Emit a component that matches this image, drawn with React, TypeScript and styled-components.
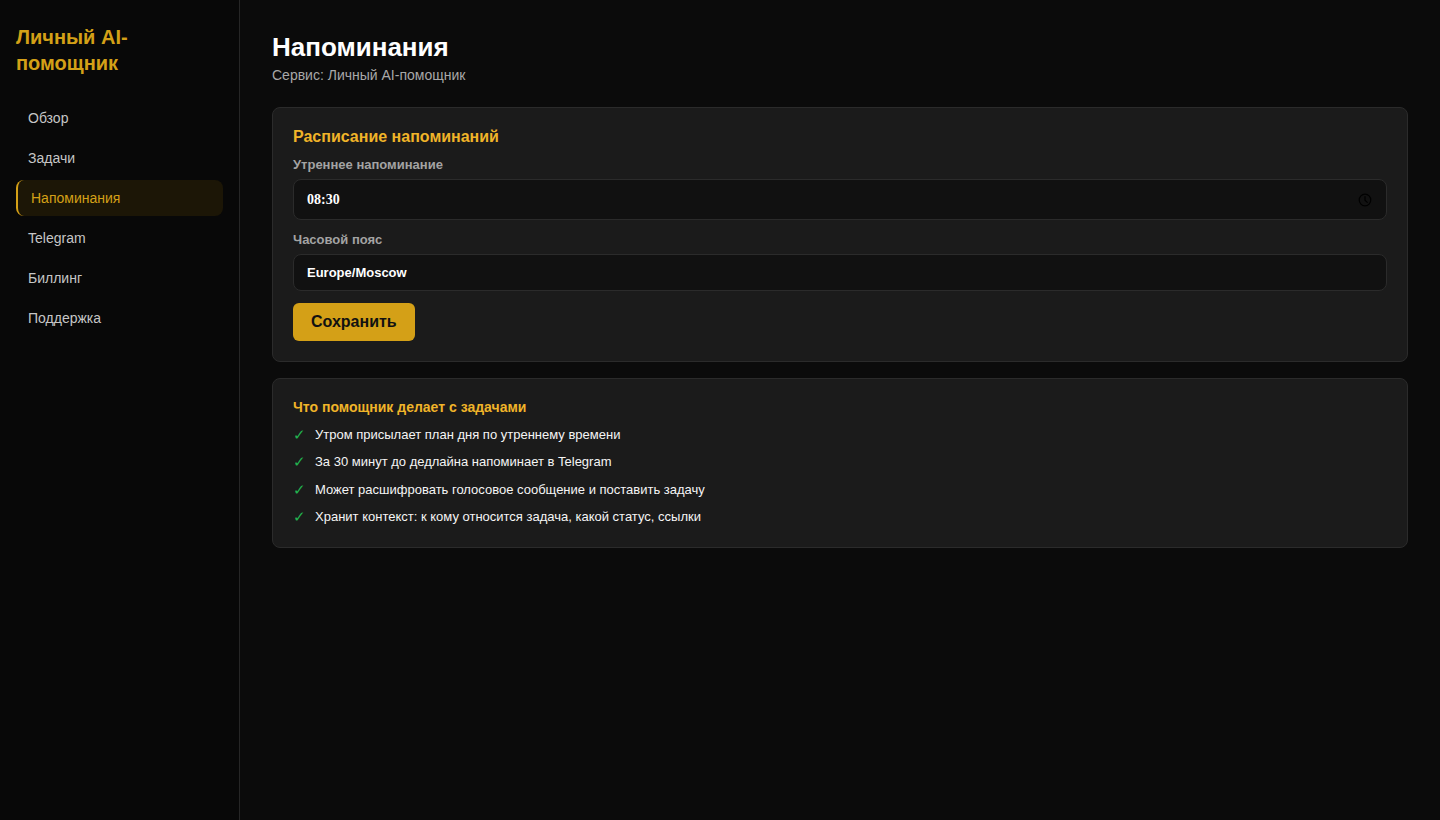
import React, { useState } from "react";
import styled, { createGlobalStyle } from "styled-components";

const GlobalStyle = createGlobalStyle`
  html, body {
    margin: 0;
    padding: 0;
    background: #0b0b0b;
    font-family: "Liberation Sans", Arial, sans-serif;
    color: #f2f2f2;
  }
  * { box-sizing: border-box; }
`;

const gold = "#d4a017";
const goldText = "#f0b429";

const Layout = styled.div`
  display: flex;
  min-height: 820px;
`;

const Sidebar = styled.aside`
  width: 240px;
  flex-shrink: 0;
  background: #080808;
  border-right: 1px solid #262626;
  padding: 24px 16px 0 16px;
`;

const Brand = styled.div`
  color: ${gold};
  font-size: 20px;
  font-weight: 800;
  line-height: 26px;
  margin-bottom: 24px;
`;

const Nav = styled.nav`
  display: flex;
  flex-direction: column;
  gap: 4px;
`;

const NavItem = styled.a<{ $active?: boolean }>`
  display: block;
  height: 36px;
  line-height: 36px;
  padding: 0 ${(p) => (p.$active ? "13px" : "12px")};
  font-size: 14px;
  border-radius: 8px;
  color: ${(p) => (p.$active ? gold : "#c6c6c6")};
  background: ${(p) => (p.$active ? "#1c1606" : "transparent")};
  border-left: ${(p) => (p.$active ? `2px solid ${gold}` : "none")};
  cursor: pointer;
`;

const Main = styled.main`
  flex: 1;
  padding: 32px 32px;
`;

const Title = styled.h1`
  margin: 0;
  font-size: 26px;
  line-height: 30px;
  font-weight: 700;
  color: #ffffff;
`;

const Subtitle = styled.div`
  margin-top: 5px;
  font-size: 14px;
  line-height: 16px;
  color: #a8a8a8;
`;

const Card = styled.section`
  margin-top: 24px;
  background: #1b1b1b;
  border: 1px solid #2b2b2b;
  border-radius: 8px;
  padding: 20px;
  & + & {
    margin-top: 16px;
    padding-bottom: 22px;
  }
`;

const CardTitle = styled.h2<{ $size?: number }>`
  margin: 0;
  font-size: ${(p) => p.$size ?? 16}px;
  line-height: 17px;
  font-weight: 700;
  color: ${goldText};
`;

const Label = styled.label`
  display: block;
  margin-top: 12px;
  margin-bottom: 7px;
  font-size: 13px;
  line-height: 15px;
  font-weight: 700;
  color: #a3a3a3;
`;

const FieldWrap = styled.div`
  position: relative;
`;

const Field = styled.input<{ $tall?: boolean; $serif?: boolean }>`
  display: block;
  width: 100%;
  height: ${(p) => (p.$tall ? 41 : 37)}px;
  background: #111111;
  border: 1px solid #2b2b2b;
  border-radius: 8px;
  padding: 0 13px;
  color: #ffffff;
  font-size: ${(p) => (p.$serif ? 14 : 13)}px;
  font-weight: 700;
  font-family: ${(p) =>
    p.$serif
      ? `"Liberation Serif", "Times New Roman", serif`
      : `"Liberation Sans", Arial, sans-serif`};
  outline: none;
`;

const ClockIcon = styled.svg`
  position: absolute;
  right: 15px;
  top: 50%;
  transform: translateY(-50%);
  width: 14px;
  height: 14px;
  pointer-events: none;
`;

const SaveButton = styled.button`
  margin-top: 12px;
  height: 38px;
  padding: 0 18px;
  background: ${gold};
  color: #111;
  border: none;
  border-radius: 6px;
  font-family: "Liberation Sans", Arial, sans-serif;
  font-size: 16px;
  font-weight: 700;
  cursor: pointer;
`;

const List = styled.ul`
  list-style: none;
  margin: 10px 0 0 0;
  padding: 0;
  display: flex;
  flex-direction: column;
  gap: 10.4px;
`;

const ListItem = styled.li`
  display: flex;
  align-items: center;
  gap: 11px;
  font-size: 13px;
  line-height: 17px;
  color: #f5f5f5;
`;

const Check = styled.span`
  color: #22b350;
  font-size: 15px;
  width: 11px;
`;

const navItems = ["Обзор", "Задачи", "Напоминания", "Telegram", "Биллинг", "Поддержка"];

const features = [
  "Утром присылает план дня по утреннему времени",
  "За 30 минут до дедлайна напоминает в Telegram",
  "Может расшифровать голосовое сообщение и поставить задачу",
  "Хранит контекст: к кому относится задача, какой статус, ссылки",
];

const App: React.FC = () => {
  const [time, setTime] = useState("08:30");
  const [zone, setZone] = useState("Europe/Moscow");

  return (
    <>
      <GlobalStyle />
      <Layout>
        <Sidebar>
          <Brand>Личный AI-помощник</Brand>
          <Nav>
            {navItems.map((item) => (
              <NavItem key={item} $active={item === "Напоминания"}>
                {item}
              </NavItem>
            ))}
          </Nav>
        </Sidebar>
        <Main>
          <Title>Напоминания</Title>
          <Subtitle>Сервис: Личный AI-помощник</Subtitle>

          <Card>
            <CardTitle>Расписание напоминаний</CardTitle>
            <Label>Утреннее напоминание</Label>
            <FieldWrap>
              <Field
                $tall
                $serif
                value={time}
                onChange={(e) => setTime(e.target.value)}
              />
              <ClockIcon viewBox="0 0 16 16" fill="none" stroke="#000" strokeWidth="1.4">
                <circle cx="8" cy="8" r="6.6" />
                <path d="M8 4.2V8.3l2.6 2.4" strokeLinecap="round" strokeLinejoin="round" />
              </ClockIcon>
            </FieldWrap>
            <Label>Часовой пояс</Label>
            <Field value={zone} onChange={(e) => setZone(e.target.value)} />
            <SaveButton>Сохранить</SaveButton>
          </Card>

          <Card>
            <CardTitle $size={14}>Что помощник делает с задачами</CardTitle>
            <List>
              {features.map((f) => (
                <ListItem key={f}>
                  <Check>✓</Check>
                  {f}
                </ListItem>
              ))}
            </List>
          </Card>
        </Main>
      </Layout>
    </>
  );
};

export default App;
